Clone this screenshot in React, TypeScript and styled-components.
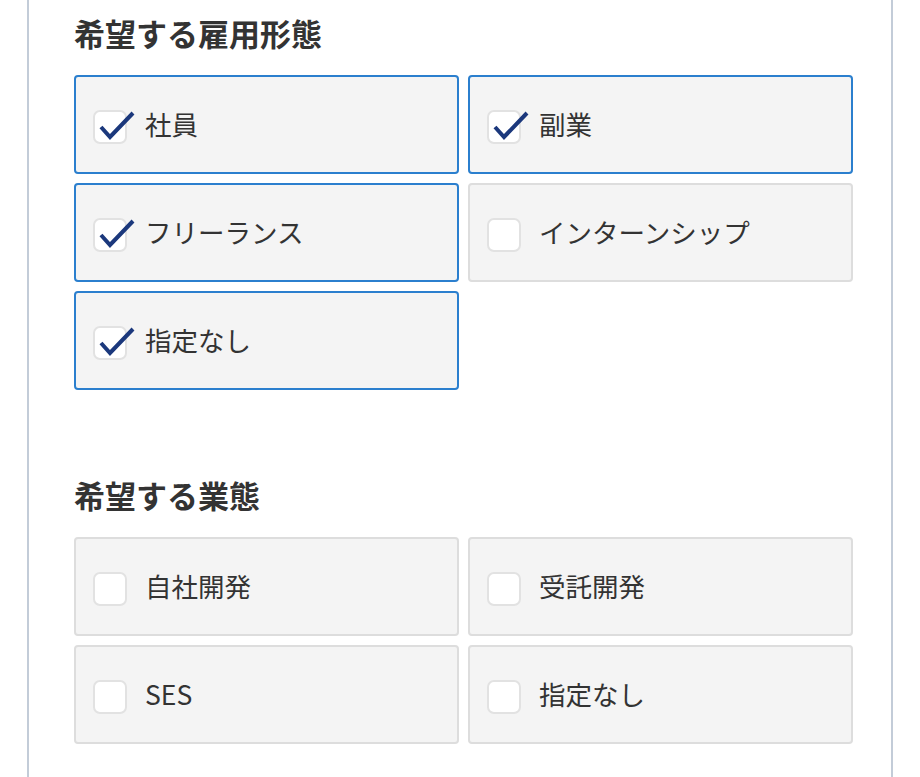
import React, { useState } from "react";
import styled, { createGlobalStyle } from "styled-components";

const GlobalStyle = createGlobalStyle`
  html, body {
    margin: 0;
    padding: 0;
    background: #ffffff;
  }
  body {
    font-family: "Noto Sans CJK JP", "Noto Sans", sans-serif;
    color: #333333;
  }
`;

const Panel = styled.div`
  margin-left: 27px;
  width: 866px;
  height: 777px;
  overflow: hidden;
  box-sizing: border-box;
  border-left: 2px solid #c3ccd8;
  border-right: 2px solid #c3ccd8;
  padding: 10px 40px 0 45px;
`;

const Section = styled.section`
  margin-bottom: 82px;
`;

const Heading = styled.h2`
  margin: 0 0 19px 0;
  font-size: 31px;
  line-height: 46px;
  font-weight: 700;
  color: #333333;
`;

const Grid = styled.div`
  display: grid;
  grid-template-columns: 385px 385px;
  gap: 9px;
`;

const Card = styled.label<{ $checked: boolean }>`
  display: flex;
  align-items: center;
  height: 99px;
  box-sizing: border-box;
  padding: 4px 0 0 17px;
  background: #f4f4f4;
  border: 2px solid ${(p) => (p.$checked ? "#2b7fce" : "#dddddd")};
  border-radius: 4px;
  cursor: pointer;
`;

const Box = styled.span`
  position: relative;
  flex: none;
  width: 34px;
  height: 34px;
  box-sizing: border-box;
  background: #ffffff;
  border: 2px solid #e2e2e2;
  border-radius: 7px;
  margin-right: 18px;
`;

const Tick = styled.svg`
  position: absolute;
  left: 4px;
  top: -4px;
  width: 36px;
  height: 36px;
  overflow: visible;
`;

const Label = styled.span`
  font-size: 26.5px;
  line-height: 34px;
  color: #333333;
  margin-top: -6px;
`;

interface Option {
  label: string;
  checked: boolean;
}

const Check: React.FC<{ option: Option; onToggle: () => void }> = ({ option, onToggle }) => (
  <Card $checked={option.checked} onClick={onToggle}>
    <Box>
      {option.checked && (
        <Tick viewBox="0 0 36 36">
          <path
            d="M2 19 L11 29 L34 5"
            fill="none"
            stroke="#1b387c"
            strokeWidth="4"
            strokeLinecap="butt"
            strokeLinejoin="miter"
          />
        </Tick>
      )}
    </Box>
    <Label>{option.label}</Label>
  </Card>
);

const App: React.FC = () => {
  const [employment, setEmployment] = useState<Option[]>([
    { label: "社員", checked: true },
    { label: "副業", checked: true },
    { label: "フリーランス", checked: true },
    { label: "インターンシップ", checked: false },
    { label: "指定なし", checked: true },
  ]);
  const [business, setBusiness] = useState<Option[]>([
    { label: "自社開発", checked: false },
    { label: "受託開発", checked: false },
    { label: "SES", checked: false },
    { label: "指定なし", checked: false },
  ]);

  const toggle = (list: Option[], set: (o: Option[]) => void, index: number) => {
    set(list.map((o, i) => (i === index ? { ...o, checked: !o.checked } : o)));
  };

  return (
    <>
      <GlobalStyle />
      <Panel>
        <Section>
          <Heading>希望する雇用形態</Heading>
          <Grid>
            {employment.map((opt, index) => (
              <Check key={index} option={opt} onToggle={() => toggle(employment, setEmployment, index)} />
            ))}
          </Grid>
        </Section>
        <Section>
          <Heading>希望する業態</Heading>
          <Grid>
            {business.map((opt, index) => (
              <Check key={index} option={opt} onToggle={() => toggle(business, setBusiness, index)} />
            ))}
          </Grid>
        </Section>
      </Panel>
    </>
  );
};

export default App;
